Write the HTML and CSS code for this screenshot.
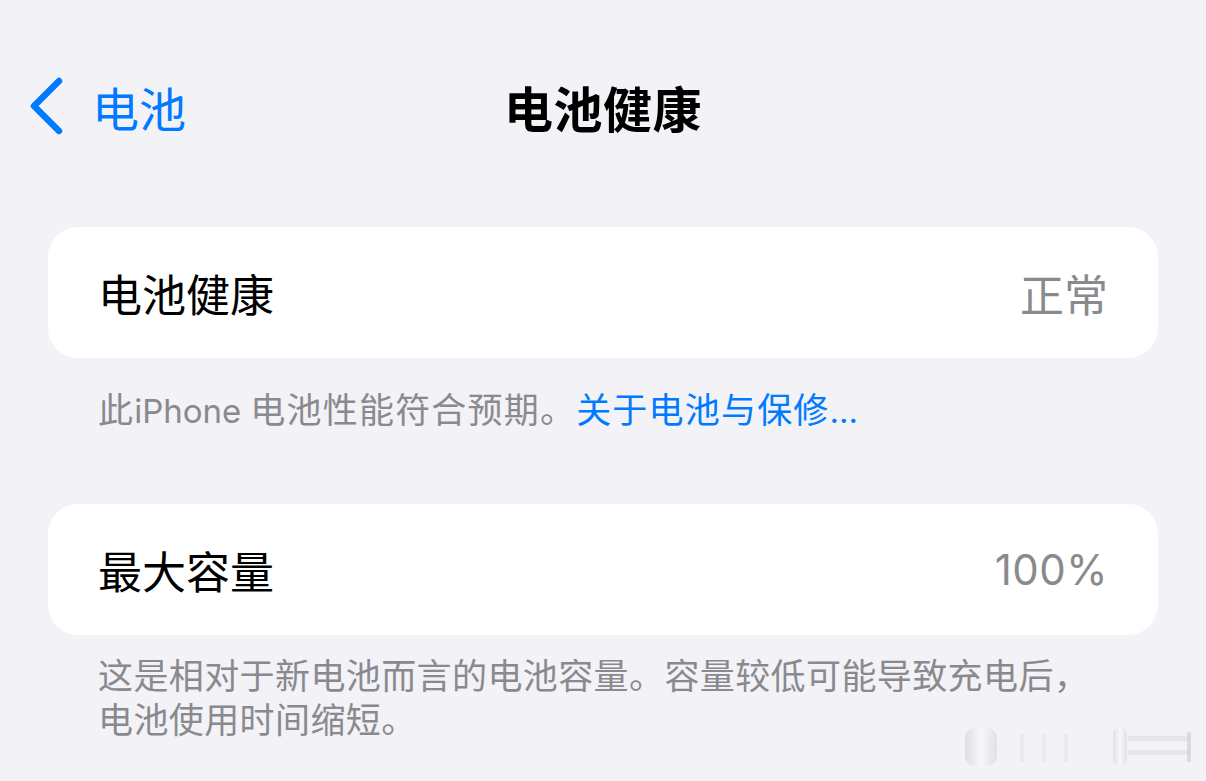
FILE: index.html
```html
<!DOCTYPE html>
<html lang="zh-CN">
<head>
<meta charset="utf-8">
<title>电池健康</title>
<link rel="stylesheet" href="styles.css">
</head>
<body>
<div class="screen">
  <header class="nav">
    <a class="back">
      <svg class="chevron" width="36" height="58" viewBox="0 0 36 58" aria-hidden="true">
        <path d="M31 4 L6 29 L31 54" fill="none" stroke="#007aff" stroke-width="6.5" stroke-linecap="round" stroke-linejoin="round"/>
      </svg>
      <span class="back-label">电池</span>
    </a>
    <h1 class="title">电池健康</h1>
    <div class="nav-spacer"></div>
  </header>

  <section class="group first">
    <div class="card">
      <span class="row-label">电池健康</span>
      <span class="row-value">正常</span>
    </div>
    <p class="footnote">此<span class="latin">iPhone</span> 电池性能符合预期。<a class="link">关于电池与保修<span class="latin">...</span></a></p>
  </section>

  <section class="group second">
    <div class="card">
      <span class="row-label">最大容量</span>
      <span class="row-value latin">100%</span>
    </div>
    <p class="footnote">这是相对于新电池而言的电池容量。容量较低可能导致充电后，<br>电池使用时间缩短。</p>
  </section>

  <div class="watermark" aria-hidden="true">
    <svg width="240" height="50" viewBox="0 0 240 50">
      <defs>
        <linearGradient id="g1" x1="0" x2="1" y1="0" y2="0">
          <stop offset="0" stop-color="#d6d6dc"/>
          <stop offset="0.5" stop-color="#fbfbfd"/>
          <stop offset="1" stop-color="#d9d9df"/>
        </linearGradient>
      </defs>
      <rect x="5" y="8" width="32" height="38" rx="10" fill="url(#g1)" opacity="0.8"/>
      <rect x="60" y="14" width="4" height="28" fill="#e4e4ea" opacity="0.6"/>
      <rect x="82" y="14" width="4" height="28" fill="#e4e4ea" opacity="0.6"/>
      <rect x="104" y="14" width="4" height="28" fill="#e4e4ea" opacity="0.6"/>
      <rect x="153" y="8" width="14" height="37" rx="6" fill="url(#g1)" opacity="0.8"/>
      <rect x="168" y="16" width="62" height="5" fill="#dcdce2" opacity="0.6"/>
      <rect x="168" y="30" width="62" height="5" fill="#dcdce2" opacity="0.6"/>
      <rect x="227" y="12" width="4" height="30" fill="#cfcfd5" opacity="0.7"/>
    </svg>
  </div>
</div>
</body>
</html>
```

FILE: styles.css
```css
* { box-sizing: border-box; }

html, body {
  margin: 0;
  padding: 0;
  background: #f2f2f7;
}

body {
  font-family: "Noto Sans CJK SC", "Noto Sans", sans-serif;
  color: #000;
}

.screen {
  position: relative;
  width: 1206px;
  height: 781px;
  overflow: hidden;
}

.nav {
  display: grid;
  grid-template-columns: 1fr auto 1fr;
  align-items: center;
  height: 60px;
  margin-top: 76px;
  padding: 0 28px;
}

.back {
  display: flex;
  align-items: center;
  gap: 28px;
  color: #007aff;
}

.chevron { display: block; }

.back-label {
  font-size: 47px;
  line-height: 1;
}

.title {
  margin: 0;
  font-size: 49px;
  font-weight: 700;
  line-height: 1;
  letter-spacing: 0.5px;
}

.group {
  margin: 0 48px;
}

.group.first { margin-top: 91px; }
.group.second { margin-top: 71px; }

.card {
  display: flex;
  align-items: center;
  justify-content: space-between;
  height: 131px;
  padding: 0 50px 0 50px;
  background: #fff;
  border-radius: 30px;
}

.row-label {
  font-size: 44px;
  line-height: 1;
}

.row-value {
  font-size: 44px;
  line-height: 1;
  color: #8a8a8e;
}

.latin {
  font-family: "Inter", "Noto Sans", sans-serif;
}

.row-value.latin {
  font-size: 42px;
  letter-spacing: 0.5px;
}

.footnote {
  margin: 0;
  padding: 0 50px;
  font-size: 35px;
  line-height: 44px;
  color: #8a8a8e;
}

.first .footnote {
  margin-top: 28px;
  letter-spacing: 1.2px;
}

.second .footnote {
  margin-top: 17px;
  letter-spacing: 0.4px;
}

.footnote .latin {
  font-size: 33px;
  letter-spacing: 0;
}

.link {
  color: #007aff;
}

.watermark {
  position: absolute;
  left: 960px;
  top: 720px;
  opacity: 0.9;
}
```
